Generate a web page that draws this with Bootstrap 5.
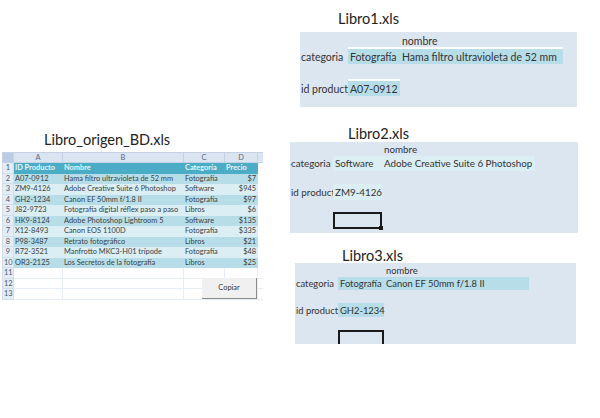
<!DOCTYPE html>
<html lang="es">
<head>
    <meta charset="UTF-8">
    <meta name="viewport" content="width=device-width, initial-scale=1.0">
    <title>Libros Excel</title>
    <link href="https://cdn.jsdelivr.net/npm/bootstrap@5.3.0/dist/css/bootstrap.min.css" rel="stylesheet">
    <style>
        body { font-family: "Lato", "Open Sans", sans-serif; color: #2b2b2b; background: #fff; }
        .page-wrap { width: 600px; height: 418px; overflow: hidden; }
        .left-side { width: 288px; padding: 131px 0 0 2px; flex: none; }
        .right-side { flex: 1; padding-top: 10px; }
        .file-title { font-size: 14.5px; line-height: 18px; color: #222; margin: 0; font-weight: 400; }
        .left-side .file-title { padding-left: 42px; margin-bottom: 3px; }

        /* hoja de excel */
        .sheet-box { width: 261px; height: 148px; position: relative; overflow: hidden; }
        .sheet { table-layout: fixed; width: 261px; border-collapse: collapse; font-size: 7.4px; line-height: 9px; }
        .sheet td, .sheet th { height: 10.5px; padding: 0 1px; border: 1px solid #e6edf6; white-space: nowrap; overflow: hidden; font-weight: 400; color: #3a3f44; }
        .sheet .col-head th { height: 9px; background: #dbe5f1; color: #5a6a80; text-align: center; border-color: #c4d2e3; }
        .sheet .corner { background: #b9cde5 !important; }
        .sheet .row-num { background: #e4ecf6; color: #4a5a70; text-align: center; border-color: #d3deeb; }
        .sheet .head-row td:not(.row-num) { background: #4bacc6; color: #e8f6fa; font-weight: 700; border-color: #4bacc6; }
        .sheet .dark td:not(.row-num) { background: #b7dee8; border-color: #b7dee8; }
        .sheet .light td:not(.row-num) { background: #daeef3; border-color: #daeef3; }
        .sheet .price { text-align: right; }
        .sheet .blank-end { background: #fff !important; border-color: #fff !important; }
        .copy-btn { position: absolute; left: 200px; top: 126px; width: 55px; height: 21px; padding: 0; font-size: 7.4px; font-family: inherit; color: #333; background: #f0f0f0; border: 0; border-right: 1px solid #8c8c8c; border-bottom: 1px solid #8c8c8c; border-radius: 0; }

        /* paneles de la derecha */
        .book-panel { display: grid; background: #dce6f1; color: #333; }
        .book-panel > div { white-space: nowrap; align-self: stretch; padding-left: 2px; padding-top: 1px; display: flex; align-items: center; line-height: 1; }
        .book-panel > .field-name { padding-left: 1px; }
        .book-panel .tone-dark { background: #b7dee8; }
        .book-panel .tone-light { background: #daeef3; }
        .panel-one > div { padding-top: 3px; }
        .book-panel > .top-line { box-shadow: inset 0 2px 0 #fff; padding-top: 3px; }
        .book-panel > .picked-cell { border: 2px solid #1a1a1a; position: relative; padding: 0; }
        .panel-three > .picked-cell { border-bottom: 0; }
        .fill-handle { position: absolute; right: -3px; bottom: -3px; width: 4px; height: 4px; background: #1a1a1a; }
        .panel-one { width: 277px; height: 75px; margin-left: 12px; font-size: 10.5px; grid-template-columns: 48px 52px 163px 14px; grid-template-rows: 15px 17px 15px 17px 11px; }
        .panel-two { width: 288px; height: 91px; margin-left: 2px; font-size: 9.8px; grid-template-columns: 43px 49px 153px 43px; grid-template-rows: 14px 15px 13px 16px 12px 17px 4px; }
        .panel-three { width: 281px; height: 81px; margin-left: 7px; font-size: 9.4px; grid-template-columns: 43px 46px 145px 47px; grid-template-rows: 14px 13px 13px 14px 13px 14px; }
        .title-one { padding-left: 50px; margin-bottom: 4px; }
        .title-two { padding-left: 60px; margin-top: 18px; line-height: 17px; }
        .title-three { padding-left: 54px; margin-top: 16px; line-height: 14px; }
        .cell-wide { grid-column: 3 / 5; }
    </style>
</head>
<body>
    <div class="page-wrap d-flex">
        <div class="left-side">
            <h1 class="file-title">Libro_origen_BD.xls</h1>
            <div class="sheet-box">
                <table class="sheet">
                    <colgroup><col style="width:11px"><col style="width:49px"><col style="width:121px"><col style="width:41px"><col style="width:33px"><col style="width:6px"></colgroup>
                    <tr class="col-head"><th class="corner"></th><th>A</th><th>B</th><th>C</th><th>D</th><th></th></tr>
                    <tr class="head-row"><td class="row-num">1</td><td>ID Producto</td><td>Nombre</td><td>Categoría</td><td>Precio</td><td class="blank-end"></td></tr>
                    <tr class="dark"><td class="row-num">2</td><td>A07-0912</td><td>Hama filtro ultravioleta de 52 mm</td><td>Fotografía</td><td class="price">$7</td><td class="blank-end"></td></tr>
                    <tr class="light"><td class="row-num">3</td><td>ZM9-4126</td><td>Adobe Creative Suite 6 Photoshop</td><td>Software</td><td class="price">$945</td><td class="blank-end"></td></tr>
                    <tr class="dark"><td class="row-num">4</td><td>GH2-1234</td><td>Canon EF 50mm f/1.8 II</td><td>Fotografía</td><td class="price">$97</td><td class="blank-end"></td></tr>
                    <tr class="light"><td class="row-num">5</td><td>J82-9723</td><td>Fotografía digital réflex paso a paso</td><td>Libros</td><td class="price">$6</td><td class="blank-end"></td></tr>
                    <tr class="dark"><td class="row-num">6</td><td>HK9-8124</td><td>Adobe Photoshop Lightroom 5</td><td>Software</td><td class="price">$135</td><td class="blank-end"></td></tr>
                    <tr class="light"><td class="row-num">7</td><td>X12-8493</td><td>Canon EOS 1100D</td><td>Fotografía</td><td class="price">$335</td><td class="blank-end"></td></tr>
                    <tr class="dark"><td class="row-num">8</td><td>P98-3487</td><td>Retrato fotográfico</td><td>Libros</td><td class="price">$21</td><td class="blank-end"></td></tr>
                    <tr class="light"><td class="row-num">9</td><td>R72-3521</td><td>Manfrotto MKC3-H01 trípode</td><td>Fotografía</td><td class="price">$48</td><td class="blank-end"></td></tr>
                    <tr class="dark"><td class="row-num">10</td><td>OR3-2125</td><td>Los Secretos de la fotografía</td><td>Libros</td><td class="price">$25</td><td class="blank-end"></td></tr>
                    <tr><td class="row-num">11</td><td></td><td></td><td></td><td></td><td></td></tr>
                    <tr><td class="row-num">12</td><td></td><td></td><td></td><td></td><td></td></tr>
                    <tr><td class="row-num">13</td><td></td><td></td><td></td><td></td><td></td></tr>
                </table>
                <button type="button" class="btn copy-btn">Copiar</button>
            </div>
        </div>

        <div class="right-side">
            <h2 class="file-title title-one">Libro1.xls</h2>
            <div class="book-panel panel-one">
                <div></div><div></div><div class="cell-wide">nombre</div>
                <div class="field-name">categoria</div><div class="tone-dark top-line">Fotografía</div><div class="tone-dark top-line">Hama filtro ultravioleta de 52 mm</div><div></div>
                <div></div><div></div><div></div><div></div>
                <div class="field-name">id product</div><div class="tone-dark top-line">A07-0912</div><div></div><div></div>
            </div>

            <h2 class="file-title title-two">Libro2.xls</h2>
            <div class="book-panel panel-two">
                <div></div><div></div><div class="cell-wide">nombre</div>
                <div class="field-name">categoria</div><div class="tone-light">Software</div><div class="tone-light">Adobe Creative Suite 6 Photoshop</div><div></div>
                <div></div><div></div><div></div><div></div>
                <div class="field-name">id product</div><div class="tone-light">ZM9-4126</div><div></div><div></div>
                <div></div><div></div><div></div><div></div>
                <div></div><div class="picked-cell"><span class="fill-handle"></span></div><div></div><div></div>
            </div>

            <h2 class="file-title title-three">Libro3.xls</h2>
            <div class="book-panel panel-three">
                <div></div><div></div><div class="cell-wide">nombre</div>
                <div class="field-name">categoria</div><div class="tone-dark">Fotografía</div><div class="tone-dark">Canon EF 50mm f/1.8 II</div><div></div>
                <div></div><div></div><div></div><div></div>
                <div class="field-name">id product</div><div class="tone-dark">GH2-1234</div><div></div><div></div>
                <div></div><div></div><div></div><div></div>
                <div></div><div class="picked-cell"></div><div></div><div></div>
            </div>
        </div>
    </div>
    <script src="https://cdn.jsdelivr.net/npm/bootstrap@5.3.0/dist/js/bootstrap.bundle.min.js"></script>
</body>
</html>
